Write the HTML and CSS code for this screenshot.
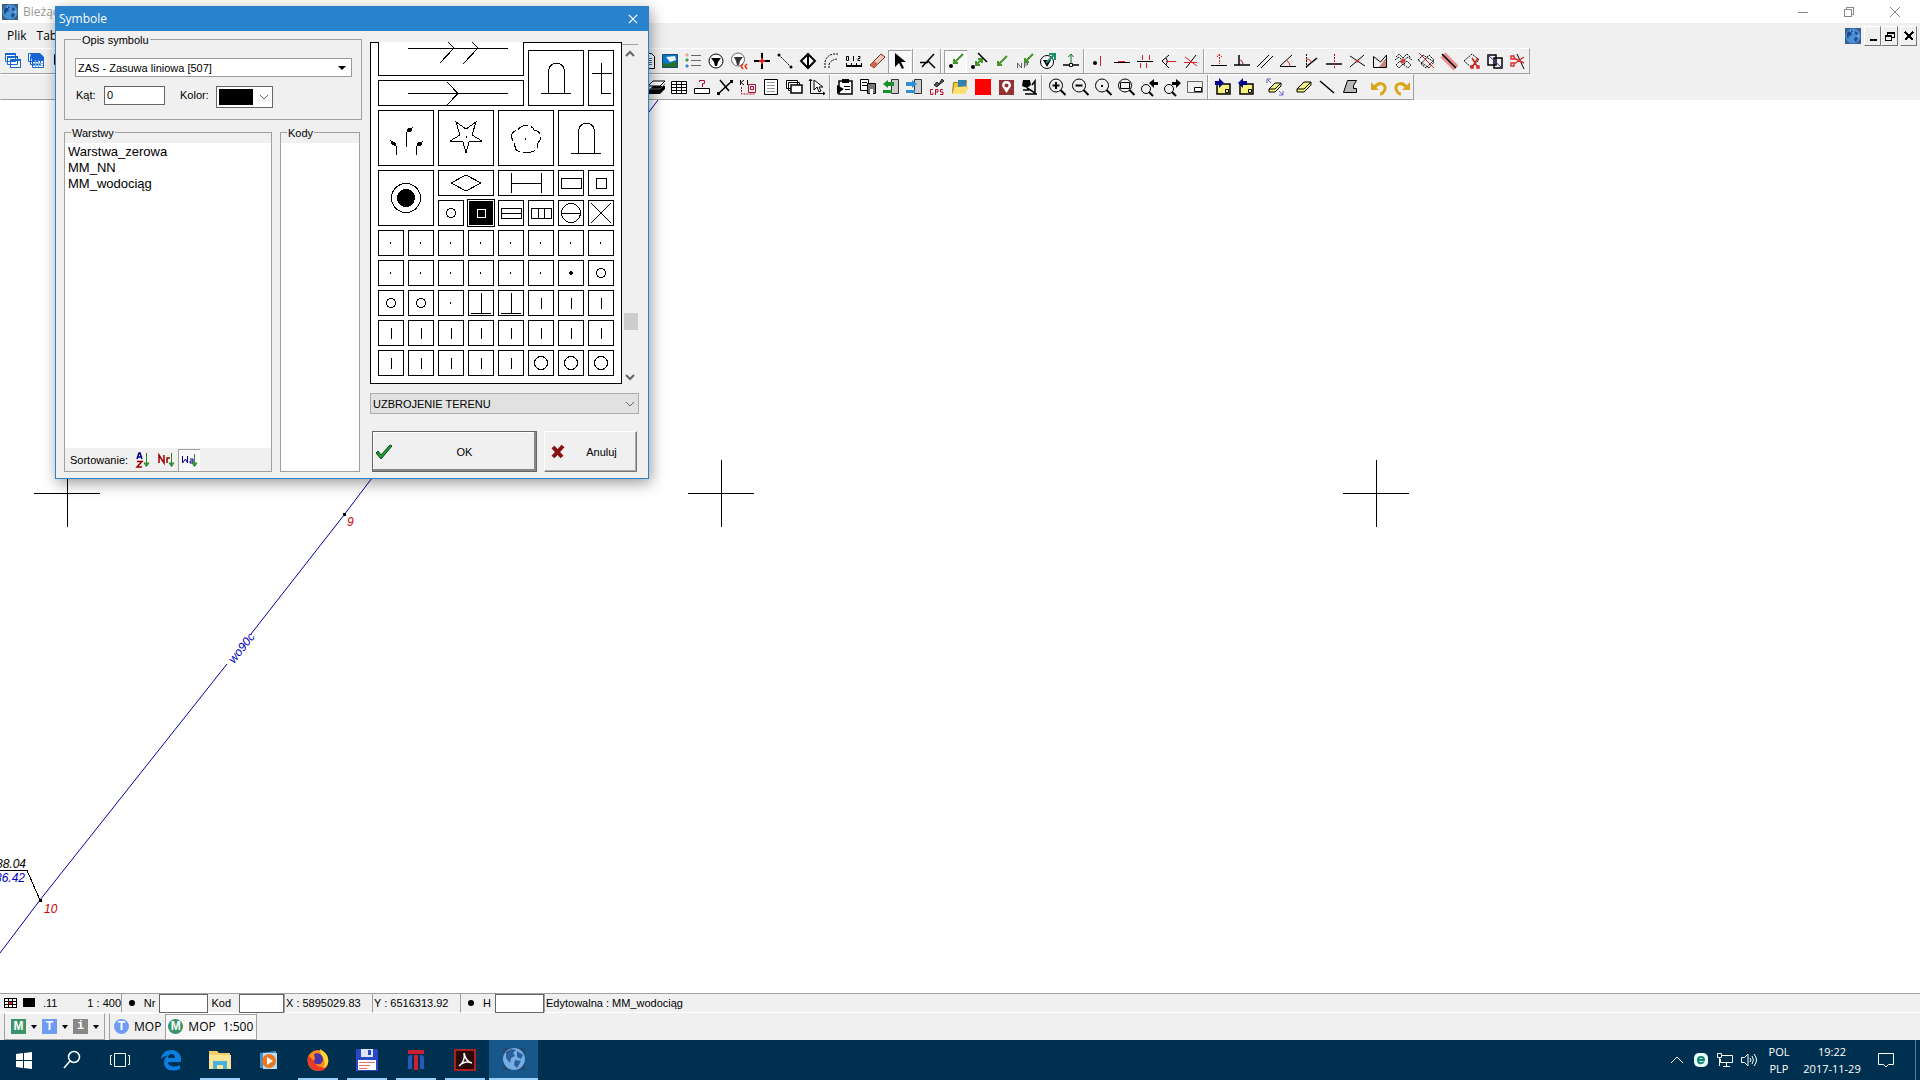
FILE: index.html
```html
<!DOCTYPE html>
<html lang="pl">
<head>
<meta charset="utf-8">
<title>Bieżąca</title>
<link rel="stylesheet" href="styles.css">
</head>
<body>
<svg class="defs" aria-hidden="true">
  <symbol id="globe" viewBox="0 0 16 16"><path fill="#3a5f8a" d="M0 0h16v16H0z"/><circle cx="8" cy="8" r="7.500" fill="#4a90d6"/><path fill="#1d4a86" d="M2 5l3-3 3 1-2 2 1 2-3 1-1 3-1-2zM10 3l3 2-1 2-2-1zM10 9l3 1-2 4-2-2z"/><path fill="#9cc8f0" d="M4 3l2-1v2zM12 8l2-1v2z"/></symbol>
  <symbol id="windot" viewBox="0 0 24 24"><path class="k" d="M11.500 11v2"/></symbol>
  <symbol id="bar" viewBox="0 0 24 24"><path class="k" d="M12.500 7v11"/></symbol>
  <symbol id="ring" viewBox="0 0 24 24"><circle class="k" cx="12" cy="12" r="4.500"/></symbol>
  <symbol id="bigring" viewBox="0 0 24 24"><circle class="k" cx="12" cy="12" r="6.500"/></symbol>
  <symbol id="tee" viewBox="0 0 24 24"><path class="k" d="M12.500 2v20M2 22.500h20"/></symbol>
  <symbol id="mag" viewBox="0 0 20 20"><circle class="k" cx="9" cy="8.500" r="6.500"/><path class="k2" d="M13.500 13l5 5"/></symbol>
  <symbol id="arch" viewBox="0 0 54 54"><path class="k" d="M12 42.500h30M19.500 42V19q2-7 8-7t8 7v23"/></symbol>
  <symbol id="caret" viewBox="0 0 10 10"><path class="g6" d="M1 3l4 4 4-4"/></symbol>
</svg>

<header class="titlebar">
  <svg class="i16"><use href="#globe"/></svg><span class="caption">Bieżąca</span>
  <div class="winctl">
    <button aria-label="Minimalizuj"><svg viewBox="0 0 12 12"><path class="g8" d="M1 6.500h10"/></svg></button>
    <button aria-label="Przywróć"><svg viewBox="0 0 12 12"><path class="g8" d="M1.500 3.500h7v7h-7zM3.500 3V1.500h7v7H9"/></svg></button>
    <button aria-label="Zamknij"><svg viewBox="0 0 12 12"><path class="g8" d="M1 1l10 10M11 1L1 11"/></svg></button>
  </div>
</header>

<nav class="menubar">
  <button>Plik</button><button>Tabela</button>
  <div class="mdi">
    <svg class="i16"><use href="#globe"/></svg>
    <button aria-label="Minimalizuj okno"><svg viewBox="0 0 12 12"><path class="k2" d="M3 10h7"/></svg></button>
    <button aria-label="Przywróć okno"><svg viewBox="0 0 12 12"><path class="k" d="M1.500 5.500h6v5h-6zM3.500 5V2.500h7v5H8M1 6.500h7M3 3.500h8"/></svg></button>
    <button class="mdi-close" aria-label="Zamknij okno"><svg viewBox="0 0 12 12"><path class="k2" d="M2 2l8 8M10 2l-8 8"/></svg></button>
  </div>
</nav>

<div class="toolbar">
  <div class="tools lead lead-top">
    <button aria-label="Okna"><svg viewBox="0 0 20 20"><path class="win" d="M2.500 2.500h10v8h-10zM4.500 5.500h10v8h-10zM7.500 8.500h10v8h-10z"/><path class="b2" d="M2 3h11M4 6h11M7 9h11"/></svg></button>
    <button aria-label="Tabele"><svg viewBox="0 0 20 20"><path class="win" d="M2.500 2.500h10v8h-10zM4.500 5.500h10v8h-10zM6.500 7.500h11v9h-11z"/><path fill="#1566d0" d="M4 2h10l4 4v4H6z"/><path fill="none" stroke="#7db4f0" d="M7 12.500h10M7 14.500h10M9.500 9v7M12.500 9v7"/></svg></button>
    <button aria-label="Nowy"><svg viewBox="0 0 20 20"><path class="k" d="M5.500 3.500h9v10h-9z"/></svg></button>
  </div>
  <div class="tools">
    <button aria-label="Dokument"><svg viewBox="0 0 20 20"><path class="k w" d="M5.500 2.500h9l3 3v12h-12z"/><path class="g6" d="M8 7.500h7M8 9.500h7M8 11.500h7M8 13.500h7"/></svg></button>
    <button aria-label="Obraz"><svg viewBox="0 0 20 20"><path fill="#0878c8" stroke="#124a78" d="M2.500 3.500h15v13h-15z"/><path fill="#e8f4ff" d="M6 6l9-1 1 4-6 2z"/><path fill="#287028" d="M3 16v-4l5 1 9-3v6z"/></svg></button>
    <button aria-label="Legenda"><svg viewBox="0 0 20 20"><path fill="#e8a090" d="M4 2l2 2-2 2-2-2z"/><path fill="#38a048" d="M4 7l2 2-2 2-2-2z"/><path fill="#4080d0" d="M4 13l2 2-2 2-2-2z"/><path class="g6" d="M8 4.500h10M8 9.500h10M8 14.500h10"/></svg></button>
    <button aria-label="Filtr"><svg viewBox="0 0 20 20"><circle class="k w" cx="10" cy="10" r="7"/><path d="M5 7h10l-3 4-1 4H9l-1-4z"/></svg></button>
    <button aria-label="Cofnij filtr"><svg viewBox="0 0 20 20"><circle class="g6 w" cx="9" cy="8.500" r="6.500"/><path fill="#333" d="M5 6h9l-3 4-1 4H8l-1-4z"/><path fill="none" stroke="#e03010" stroke-width="1.500" d="M14 13l-2 2 2 3M18 13l-2 2 2 3"/></svg></button>
    <button aria-label="Punkt"><svg viewBox="0 0 20 20"><path class="k2" d="M10 2v5M10 13v5M2 10h5M13 10h5"/><path class="r2" d="M10 7v6M7 10h6"/></svg></button>
    <button aria-label="Odcinek"><svg viewBox="0 0 20 20"><path class="k dash" d="M4 4l12 12"/><circle cx="4" cy="4" r="1.500"/><circle cx="16" cy="16" r="1.500"/></svg></button>
    <button aria-label="Symbol"><svg viewBox="0 0 20 20"><path class="k2 w" d="M10 3l7 7-7 7-7-7z"/><path class="k2" d="M10 3v14"/></svg></button>
    <button aria-label="Łuk"><svg viewBox="0 0 20 20"><path class="k dash" d="M4 17V11q1-6 8-8h5M8 17v-3q1-5 8-6"/></svg></button>
    <button aria-label="Miara"><svg viewBox="0 0 20 20"><path class="k2" d="M2 15h16"/><path class="k" d="M2.500 12v3M17.500 12v3M7.500 12v2M12.500 12v2M2.500 5.500h2v4h-2zM9.500 5v5M14 5.500h2v2h-2v2h2"/></svg></button>
    <button aria-label="Gumka"><svg viewBox="0 0 20 20"><path fill="#f0c8b8" stroke="#703020" d="M3 14L14 3l4 3L7 17z"/><path fill="#c86850" d="M3 14l4-4 4 3-4 4z"/></svg></button>
    <button class="on" aria-label="Wskaż"><svg viewBox="0 0 20 20"><path d="M5 2v14l4-4 3 6 2-1-3-6h5z"/></svg></button>
    <i class="sep"></i>
    <button aria-label="Prostopadła"><svg viewBox="0 0 20 20"><path class="k15" d="M2 11.500h8M4 16L16 3M10 10l7 7"/></svg></button>
    <i class="sep"></i>
    <button class="on" aria-label="Kieruj do punktu"><svg viewBox="0 0 20 20"><path class="gr" d="M17 3l-9 9M8 8v4h4"/><circle cx="5" cy="15" r="2"/></svg></button>
    <button aria-label="Kieruj do linii"><svg viewBox="0 0 20 20"><path class="gr" d="M13 8l-6 6M7 10v4h4M9 8h4v4"/><path class="k15" d="M9 2l9 9"/><circle cx="4" cy="16" r="2"/></svg></button>
    <button aria-label="Kieruj"><svg viewBox="0 0 20 20"><path class="gr" d="M15 5l-9 9M6 10v4h4"/></svg></button>
    <button aria-label="Numer"><svg viewBox="0 0 20 20"><path class="gr" d="M18 3l-8 8M10 7v4h4"/><path class="g6" d="M2.500 17v-5l4 5v-5M9.500 17v-5h3v2h-3"/></svg></button>
    <button aria-label="Filtr kierunku"><svg viewBox="0 0 20 20"><circle class="k w" cx="9" cy="11" r="6.500"/><path d="M5 9h8l-4 7z"/><path class="te" d="M8 12l9-9M11 3h6v6"/></svg></button>
    <button aria-label="Rzut"><svg viewBox="0 0 20 20"><path class="k15" d="M2 14h16"/><path class="k w" d="M8.500 12.500h3v3h-3z"/><path fill="none" stroke="#107820" d="M10 3v9M7.500 6L10 3l2.500 3"/></svg></button>
    <i class="sep"></i>
    <button aria-label="Odsunięcie"><svg viewBox="0 0 20 20"><circle cx="6" cy="12" r="2"/><path class="r" d="M11.500 5v10"/></svg></button>
    <button aria-label="Na linii"><svg viewBox="0 0 20 20"><path class="k" d="M2 11.500h16"/><path class="r" d="M6 10.500h7"/></svg></button>
    <button aria-label="Przecięcia"><svg viewBox="0 0 20 20"><path class="k" d="M2 10.500h16"/><path class="r" d="M7.500 4v5M14.500 4v5M5.500 12v5M11.500 12v5"/></svg></button>
    <button aria-label="Kąt"><svg viewBox="0 0 20 20"><path class="k" d="M11 4l-7 6 7 7M8 7q3 3 0 7"/><path class="r" d="M8 10.500h10"/></svg></button>
    <button aria-label="Krzyżowanie"><svg viewBox="0 0 20 20"><path class="k" d="M5 17L15 4"/><path class="r" d="M4 6l12 9M3 11.500h13"/></svg></button>
    <i class="sep"></i>
    <button aria-label="Pion"><svg viewBox="0 0 20 20"><path class="k" d="M2 14.500h16"/><path class="r dash" d="M10.500 3v10M8 6l2-3 3 3"/></svg></button>
    <button aria-label="Kąt prosty"><svg viewBox="0 0 20 20"><path class="k15" d="M2 14h16M7 4v10"/><path class="rd" d="M7 9q4 0 4 5"/></svg></button>
    <button aria-label="Równoległa"><svg viewBox="0 0 20 20"><path class="k" d="M2 16L14 4M6 17L18 5"/></svg></button>
    <button aria-label="Kąt ostry"><svg viewBox="0 0 20 20"><path class="k" d="M2 15.500h16M2 15L14 4"/><path class="r" d="M8 9q4 2 4 6"/></svg></button>
    <button aria-label="Kąt linii"><svg viewBox="0 0 20 20"><path class="k dash" d="M5.500 3v14"/><path class="k15" d="M5 16L16 7"/><path class="r" d="M5 8q5 0 5 4"/></svg></button>
    <button aria-label="Rzut punktu"><svg viewBox="0 0 20 20"><path class="k15" d="M2 13h16"/><path class="rd dash" d="M10.500 3v14"/></svg></button>
    <button aria-label="Przecięcie"><svg viewBox="0 0 20 20"><path class="k" d="M3 5l15 10M3 16L17 4"/><circle cx="10" cy="10" r="1.500" fill="#d22"/></svg></button>
    <button aria-label="Obszar"><svg viewBox="0 0 20 20"><path class="k" d="M3.500 5.500v11h13V4l-6 7z"/><path fill="#d08080" d="M9 16l7-9v9z"/></svg></button>
    <button aria-label="Oczka"><svg viewBox="0 0 20 20"><path class="k dash" d="M3 6l3-3 4 4 4-4 4 4M2 9l4-3 4 4 5-4 4 3M3 14l4-4 3 4 4-4 4 4-3 3-5-4-4 4z"/><path fill="#c44" d="M10 7l3 3-3 3-3-3z"/></svg></button>
    <button aria-label="Siatka"><svg viewBox="0 0 20 20"><path class="k dash" d="M2 9l5-5 11 7-5 6zM5 13l8-9 5 5-8 8z"/><path class="r" d="M3 2l15 15"/></svg></button>
    <button aria-label="Pas"><svg viewBox="0 0 20 20"><path fill="none" stroke="#e89090" stroke-width="7" d="M4 4l13 13"/><path class="k15" d="M3 3l14 14"/></svg></button>
    <button aria-label="Wytnij obszar"><svg viewBox="0 0 20 20"><path class="k dash" d="M2 10l8-7 7 6-8 7z"/><path fill="none" stroke="#c22" stroke-width="1.500" d="M10 7l5 8M16 7l-5 8M9 15h2v2H9zM15 15h2v2h-2z"/></svg></button>
    <button aria-label="Podziel"><svg viewBox="0 0 20 20"><path class="k15" d="M3 4h8v10H3zM9 7h8v10H9z"/><path fill="none" stroke="#33b" d="M3 4l14 13"/></svg></button>
    <button aria-label="Przytnij"><svg viewBox="0 0 20 20"><path class="k" d="M9 3l7 15"/><path fill="none" stroke="#d33" stroke-width="1.500" d="M16 6L6 13M16 12L6 7M3 5h3v3H3zM3 12h3v3H3z"/></svg></button>
  </div>
</div>

<div class="toolbar">
  <div class="tools lead lead-bottom"></div>
  <div class="tools">
    <button aria-label="Warstwy"><svg viewBox="0 0 20 20"><path class="k w" d="M7 4h12l-5 5H2z"/><path d="M7 9h12v3l-5 5H2v-3z"/><path class="g6" d="M2 12h12l5-5"/></svg></button>
    <button aria-label="Tabela"><svg viewBox="0 0 20 20"><path class="k w" d="M2.500 4.500h15v12h-15zM2 7.500h16M2 10.500h16M2 13.500h16M7.500 4v12M12.500 4v12"/></svg></button>
    <button aria-label="Zapytanie"><svg viewBox="0 0 20 20"><path class="k w" d="M2.500 11.500h15v5h-15z"/><path class="rd" d="M7.500 5V3.500h5v3h-2V10"/></svg></button>
    <button aria-label="Punkty linii"><svg viewBox="0 0 20 20"><path class="k15" d="M3 17L17 4M5 3l9 11"/><path d="M2 15h3v3H2zM15 3h3v3h-3z"/></svg></button>
    <button aria-label="Kontrola"><svg viewBox="0 0 20 20"><path class="k" d="M2.500 3v5M6 3L3 5.500 6 8M9.500 3v5"/><path class="rd" d="M10.500 7.500h7v8h-7zM12.500 9.500h3v3h-3z"/><path class="rd dash" d="M3.500 10v7H17"/></svg></button>
    <button aria-label="Opis"><svg viewBox="0 0 20 20"><path class="k w" d="M3.500 2.500h13v15h-13z"/><path fill="none" stroke="#999" d="M6 5.500h8M6 8.500h8M6 11.500h8M6 14.500h8"/></svg></button>
    <button aria-label="Kaskada"><svg viewBox="0 0 20 20"><path class="k w" d="M2.500 3.500h11v8h-11zM4.500 5.500h11v8h-11z"/><path class="k15 w" d="M7 8h11v8H7z"/></svg></button>
    <button aria-label="Wskaż wierzchołek"><svg viewBox="0 0 20 20"><path class="k" d="M3.500 3v13.500H18M2 4l1.500-2L5 4M16 15l2 1.500-2 1.500"/><path class="k w" d="M7 3v10l3-3 2 5 2-1-2-4h4z"/></svg></button>
    <i class="sep"></i>
    <button aria-label="Wklej"><svg viewBox="0 0 20 20"><path class="k15 w" d="M4 4h13v13H4z"/><path d="M7 2h7v4H7zM2 8l7 4-7 5z"/><path class="k" d="M9 9.500h6M10 12.500h5"/></svg></button>
    <button aria-label="Kopiuj"><svg viewBox="0 0 20 20"><path class="k w" d="M2.500 2.500h8v11h-8z"/><path class="k" d="M4 5.500h5M4 8.500h5"/><path fill="#777" stroke="#000" d="M9.500 6.500h8v10h-8z"/><path fill="#fff" d="M12 12h3v5h-3z"/></svg></button>
    <button aria-label="Import"><svg viewBox="0 0 20 20"><path fill="#ccc" stroke="#333" d="M10.500 2.500h7v14h-7z"/><path fill="#189030" d="M2 7l5-4v2h6v4H7v2zM2 13h9v3H2z"/></svg></button>
    <button aria-label="Eksport"><svg viewBox="0 0 20 20"><path fill="#ccc" stroke="#333" d="M10.500 2.500h7v14h-7z"/><path fill="#3090d0" d="M13 7L8 3v2H2v4h6v2zM2 13h9v3H2z"/></svg></button>
    <button aria-label="GPS"><svg viewBox="0 0 20 20"><path fill="#555" stroke="#222" d="M7 8l3-3 2 2 3-5 2 2-4 3-3 3z"/><path class="rd" d="M6 12.500H3.500v5H6v-2M8.500 18v-5.500H11V15H9M16 12.500h-2.500V15H16v2.500h-3"/></svg></button>
    <button aria-label="Otwórz"><svg viewBox="0 0 20 20"><path fill="#f5c530" stroke="#a07818" d="M3.500 5.500h5l2-2h6l-1 12-13 1z"/><path fill="#3080b0" d="M8 3h8v6l-8 1z"/><path fill="#ffe070" d="M5 10h14l-4 7H2z"/></svg></button>
    <button aria-label="Czerwony"><svg viewBox="0 0 20 20"><path fill="#f00" d="M2 2h16v16H2z"/></svg></button>
    <button aria-label="Lokalizacja"><svg viewBox="0 0 20 20"><path fill="#933232" d="M3 3h15v15H3z"/><path fill="#fff" d="M10.500 16L6 9q0-5 4.500-5T15 9z"/><circle cx="10.500" cy="8.500" r="2" fill="#933232"/></svg></button>
    <button aria-label="Teren"><svg viewBox="0 0 20 20"><path d="M4 3h7l1 5-4 3-5-2z"/><path class="k15" d="M8 11l8 5V4l-3 4M4 13h6M6 17h12"/></svg></button>
    <i class="sep"></i>
    <button aria-label="Powiększ"><svg viewBox="0 0 20 20"><use href="#mag"/><path class="k2" d="M9 5v7M5.500 8.500h7"/></svg></button>
    <button aria-label="Pomniejsz"><svg viewBox="0 0 20 20"><use href="#mag"/><path class="k2" d="M5.500 8.500h7"/></svg></button>
    <button aria-label="Centruj"><svg viewBox="0 0 20 20"><use href="#mag"/><path d="M8 8h2v2H8z"/></svg></button>
    <button aria-label="Okno"><svg viewBox="0 0 20 20"><use href="#mag"/><path class="k" d="M4.500 5.500h9v6h-9z"/></svg></button>
    <button aria-label="Poprzedni widok"><svg viewBox="0 0 20 20"><circle class="k" cx="7" cy="12" r="4.500"/><path class="k2" d="M10 15l4 4"/><path d="M10 6l5-4v3h4v3h-4v3z"/></svg></button>
    <button aria-label="Następny widok"><svg viewBox="0 0 20 20"><circle class="k" cx="7" cy="12" r="4.500"/><path class="k2" d="M10 15l4 4"/><path d="M19 6l-5-4v3h-4v3h4v3z"/></svg></button>
    <button aria-label="Podgląd"><svg viewBox="0 0 20 20"><path class="g6" d="M2.500 4.500h15v11h-15z"/><path class="k w" d="M9.500 10.500h7v4h-7z"/></svg></button>
    <i class="sep"></i>
    <button aria-label="Dalej"><svg viewBox="0 0 20 20"><path fill="#f5f080" stroke="#000" stroke-width="1.500" d="M4 7h13v10H4z"/><path fill="#008" d="M2 4h4V1l5 5-5 5V8H2z"/><path class="k" d="M12.500 12.500h3v3h-3z"/></svg></button>
    <button aria-label="Wstecz"><svg viewBox="0 0 20 20"><path fill="#f5f080" stroke="#000" stroke-width="1.500" d="M4 7h13v10H4z"/><path fill="#008" d="M11 4H7V1L2 6l5 5V8h4z"/><path class="k" d="M12.500 12.500h3v3h-3z"/></svg></button>
    <i class="gap"></i>
    <button aria-label="Gumka obszaru"><svg viewBox="0 0 20 20"><path fill="#f0f080" stroke="#000" d="M4 12l6-6h6v3l-6 6H4z"/><path class="k" d="M4 12h6l6-6"/><path fill="none" stroke="#66c" d="M2 6V2h4M2 2l4 4M18 14v4h-4M18 18l-4-4"/></svg></button>
    <i class="gap"></i>
    <button aria-label="Usuń"><svg viewBox="0 0 20 20"><path fill="#f0f080" stroke="#000" d="M3 12l7-7h7v3l-7 7H3z"/><path class="k" d="M3 12h7l7-7"/></svg></button>
    <button aria-label="Linia"><svg viewBox="0 0 20 20"><path class="k15" d="M3 4l14 12"/></svg></button>
    <button aria-label="Wielobok"><svg viewBox="0 0 20 20"><path fill="#b8b8b8" stroke="#000" d="M7.500 3.500h9l-3 5v3h3v4h-13z"/></svg></button>
    <i class="gap"></i>
    <button aria-label="Cofnij"><svg viewBox="0 0 20 20"><path fill="none" stroke="#dba520" stroke-width="3" d="M6 10c4-6 11-3 10 2-1 3-2 5-5 5"/><path fill="#dba520" d="M2 5v8h8z"/></svg></button>
    <button aria-label="Ponów"><svg viewBox="0 0 20 20"><path fill="none" stroke="#dba520" stroke-width="3" d="M14 10c-4-6-11-3-10 2 1 3 2 5 5 5"/><path fill="#dba520" d="M18 5v8h-8z"/></svg></button>
  </div>
</div>

<main class="map">
  <svg class="drawing">
    <g class="k">
      <path d="M34 393.500h66M67.500 360v67M688 393.500h66M721.500 360v67M1343 393.500h66M1376.500 360v67"/>
      <path d="M0 770.500h27L40 800"/>
    </g>
    <path class="pipe" d="M658 0L344 415L251 534M227 564L40 800L0 853"/>
    <path d="M343 413h3v3h-3zM39 799h3v3h-3z"/>
    <g class="cad">
      <text class="red" x="347" y="426">9</text>
      <text class="red" x="44" y="813">10</text>
      <text x="-4" y="768">88.04</text>
      <text class="blue" x="-5" y="782">86.42</text>
      <text class="blue" transform="translate(234 564) rotate(-52)">wo90c</text>
    </g>
  </svg>
</main>

<footer class="status">
  <div class="cell c-scale">
    <svg class="i14" viewBox="0 0 14 14"><path class="k w" d="M.5 2.500h12v9H.5zM0 5.500h13M0 8.500h13M4.500 2v10M8.500 2v10"/><path class="r2" d="M5 7h3"/></svg>
    <svg class="i14" viewBox="0 0 14 14"><path d="M1 2h12v9H1z"/></svg>
    <span class="size">.11</span><span class="push">1 : 400</span>
  </div>
  <div class="cell c-nr"><span class="dot"></span><label for="nr">Nr</label><input id="nr"><label for="kod">Kod</label><input id="kod" class="short"></div>
  <div class="cell c-x">X : 5895029.83</div>
  <div class="cell c-x">Y : 6516313.92</div>
  <div class="cell c-h"><span class="dot"></span><label for="h">H</label><input id="h"></div>
  <div class="cell c-edit">Edytowalna : MM_wodociąg</div>
</footer>

<div class="modes">
  <div class="modegroup">
    <button><b class="tile green">M</b><i class="drop"></i></button>
    <button><b class="tile azure">T</b><i class="drop"></i></button>
    <button><b class="tile gray">i</b><i class="drop"></i></button>
  </div>
  <div class="modegroup tight">
    <button><b class="tile azure round">T</b>MOP</button>
    <button class="on"><b class="tile green round">M</b><span>MOP</span><span>1:500</span></button>
  </div>
</div>

<nav class="taskbar">
  <button class="sys" aria-label="Start"><svg viewBox="0 0 24 24"><path fill="#fff" d="M4 6l7-1v7H4zM12 5l8-1v8h-8zM4 13h7v7l-7-1zM12 13h8v8l-8-1z"/></svg></button>
  <button class="sys" aria-label="Szukaj"><svg viewBox="0 0 24 24"><g fill="none" stroke="#fff" stroke-width="1.500"><circle cx="14" cy="9" r="5.500"/><path d="M10 13l-6 7"/></g></svg></button>
  <button class="sys" aria-label="Widok zadań"><svg viewBox="0 0 24 24"><path fill="none" stroke="#fff" d="M6.500 5.500h11v13h-11zM4 7.500H2.500v9H4M20 7.500h1.500v9H20"/></svg></button>
  <button class="first" aria-label="Edge"><svg viewBox="0 0 24 24"><path fill="#0b7fe0" d="M2 11C3 5 7 2 12 2c6 0 10 4 10 9v3H9c0 3 3 4.500 6 4.500 2 0 4-.5 6-1.500v4c-2 1-4.500 1.500-7 1.500-6 0-9-3.500-9-8 0-3 1.500-5.500 4-7-3 .5-5.500 1.500-7 3.500zm7-1h7c0-2-1-4-3.500-4S9 8 9 10z"/></svg></button>
  <button class="run" aria-label="Eksplorator"><svg viewBox="0 0 24 24"><path fill="#f0cd68" d="M1 3h8l2 2h11v16H1z"/><path fill="#fbe498" d="M1 7h22v14H1z"/><path fill="#48b0dc" d="M5 13h14v8h-4v-4H9v4H5z"/></svg></button>
  <button aria-label="Odtwarzacz"><svg viewBox="0 0 24 24"><path fill="#4a8fc8" d="M3 5l16-2v18L3 20z"/><path fill="#b8dcf2" d="M6 5h14v16H6z"/><circle cx="12" cy="13" r="7" fill="#e87820"/><path fill="#fff" d="M10 9l6 4-6 4z"/></svg></button>
  <button class="run" aria-label="Firefox"><svg viewBox="0 0 24 24"><circle cx="12" cy="12.500" r="10.500" fill="#ff8a18"/><path fill="#e83a28" d="M2 7c-2 9 3 16 11 16 4 0 7-2 9-6-5 4-12 2-13-3z"/><path fill="#ffd636" d="M14 1c5 3 9 7 8 14-1 3-3 5-5 5 3-5 2-9-2-12z"/><path fill="#4a35a8" d="M8 6c5-2 9 1 9 5s-3 6-6 5c-3 0-4-3-2-5z"/></svg></button>
  <button class="run" aria-label="Dyskietka"><svg viewBox="0 0 24 24"><path fill="#2848c8" d="M1 1h21l1 2v20H1z"/><path fill="#dfe4f4" d="M6 1h12v8H6z"/><path fill="#2848c8" d="M13 2h3v5h-3z"/><path fill="#fff" d="M3 12h18v10H3z"/><path fill="none" stroke="#e87070" d="M4 14.500h16M4 17.500h11M4 20.500h8"/></svg></button>
  <button class="run" aria-label="Projekt"><svg viewBox="0 0 24 24"><path fill="#cc2030" d="M4 2h16v4H4zM10 7h4v15h-4z"/><path fill="#2858b8" d="M4 10q0-3 4-3v14H4zM16 7q4 0 4 3v11h-4z"/></svg></button>
  <button class="run" aria-label="Acrobat"><svg viewBox="0 0 24 24"><path fill="#280808" stroke="#e02018" stroke-width="1.500" d="M2 2h20v20H2z"/><path fill="none" stroke="#fff" stroke-width="1.500" d="M11 5c1 5 3 9 8 10-5-2-9-1-13 3 4-3 6-8 5-13z"/></svg></button>
  <button class="active" aria-label="Mapa"><svg viewBox="0 0 24 24"><path fill="#234a70" d="M1 1h22v22H1z"/><circle cx="12" cy="12" r="11" fill="#76aee2"/><path fill="#2a5f9c" d="M4 5l5-3 5 1-3 3 2 3-4 2-1 5-4-5zM15 4l6 4-2 4-4-2zM13 13l6 1-4 7-3-3z"/></svg></button>
  <div class="tray">
    <button aria-label="Ukryte ikony"><svg viewBox="0 0 16 16"><path class="t" d="M2 11l6-6 6 6"/></svg></button>
    <button aria-label="Antywirus"><svg viewBox="0 0 16 16"><rect x="1" y="1" width="14" height="14" rx="5" fill="#e8fffa"/><path fill="none" stroke="#108070" stroke-width="2" d="M5 8h6c0-4-6-4-6 0s3 4 6 2"/></svg></button>
    <button aria-label="Sieć"><svg viewBox="0 0 16 16"><path class="t" d="M5 3.500h10.500v7H3.500V7M9.500 11v3M6 14.500h7M.5 1.500h4v4h-4zM2.500 6v8"/></svg></button>
    <button aria-label="Głośność"><svg viewBox="0 0 16 16"><path class="t" d="M.5 5.500h3L7 2v12l-3.500-3.500h-3zM9 6q2 2 0 4M11 4q3 4 0 8M13 2q5 6 0 12"/></svg></button>
    <div class="stack lang"><span>POL</span><span>PLP</span></div>
    <div class="stack clock"><span>19:22</span><span>2017-11-29</span></div>
    <button class="note" aria-label="Powiadomienia"><svg viewBox="0 0 16 16"><path class="t" d="M.5 1.500h15v11h-5L8 15l-2.500-2.500h-5z"/></svg></button>
  </div>
</nav>

<section class="dialog" role="dialog" aria-labelledby="dlg">
  <header><h1 id="dlg">Symbole</h1><button aria-label="Zamknij"><svg viewBox="0 0 12 12"><path fill="none" stroke="#fff" stroke-width="1.500" d="M1 1l10 10M11 1L1 11"/></svg></button></header>
  <div class="dlg-body">
    <div class="left">
      <fieldset class="desc">
        <legend>Opis symbolu</legend>
        <div class="combo">
          <select aria-label="Symbol"><option>ZAS - Zasuwa liniowa [507]</option></select>
          <i class="drop"></i>
        </div>
        <div class="params">
          <label for="kat">Kąt:</label><input id="kat" value="0">
          <label for="kolor">Kolor:</label>
          <div class="combo color"><select id="kolor"><option value="#000000" aria-label="czarny"></option></select><svg class="chev"><use href="#caret"/></svg></div>
        </div>
      </fieldset>
      <div class="lists">
        <fieldset class="layers">
          <legend>Warstwy</legend>
          <ul><li>Warstwa_zerowa</li><li>MM_NN</li><li>MM_wodociąg</li></ul>
          <div class="sort"><span>Sortowanie:</span>
            <button aria-label="Alfabetycznie"><svg viewBox="0 0 18 18"><path fill="none" stroke="#008" stroke-width="1.500" d="M3 8l2-6h1l2 6M4 6h4"/><path fill="none" stroke="#900" stroke-width="1.500" d="M3 10.500h5L3 16h5"/><path class="ar" d="M12.500 2v13M10 12l2.500 3.500L15 12z"/></svg></button>
            <button aria-label="Według numeru"><svg viewBox="0 0 18 18"><path fill="none" stroke="#900" stroke-width="1.500" d="M2 12V4l5 8V4M10 12V7h3"/><path class="ar" d="M14.500 2v13M12 12l2.500 3.500L17 12z"/></svg></button>
            <button class="on" aria-label="Według warstwy"><svg viewBox="0 0 18 18"><path fill="none" stroke="#008" d="M2.500 5v7l3-4 2 4V5M10 8h3v4h-3v-2h3"/><path class="ar" d="M14.500 3v12M12 12l2.500 3.500L17 12z"/></svg></button>
          </div>
        </fieldset>
        <fieldset class="codes"><legend>Kody</legend><div class="blank"></div></fieldset>
      </div>
    </div>
    <div class="right">
      <div class="picker">
        <div class="palette"><div class="grid">
          <button class="w5 h2"><svg viewBox="0 0 144 54"><path class="k" d="M29 27.500h100M65 17l10 10-14 15M89 17l10 10-15 16"/></svg></button>
          <i class="w3"></i>
          <button class="w2 h2"><svg><use href="#arch"/></svg></button>
          <button class="h2"><svg viewBox="0 0 24 54"><path class="k" d="M12.500 12v30.500H22M3 22.500h20"/></svg></button>
          <button class="w5"><svg viewBox="0 0 144 24"><path class="k" d="M29 12.500h100M68 1l11 11.500L68 24"/></svg></button>
          <button class="w2 h2"><svg viewBox="0 0 54 54"><path class="k" d="M27.500 36V21M17.500 44v-9M37.500 44v-9"/><path stroke="#000" d="M28 21l1-3 4-1-1 3zM17 35l-4-2-1-3 4 2zM38 35l1-3 4-1-1 3z"/></svg></button>
          <button class="w2 h2"><svg viewBox="0 0 54 54"><path class="k" d="M17 11l10 7 10-7-4 13 10 6-13 1-3 11-3-11-13-1 10-6zM27 25v2"/></svg></button>
          <button class="w2 h2"><svg viewBox="0 0 54 54"><path class="k" stroke-dasharray="12 3" d="M19 19c2-6 14-6 16 0 8 1 8 9 4 13 0 8-5 10-12 9-7 1-12-1-11-9-5-4-5-12 3-13z"/><path class="k" d="M26.500 27v2"/></svg></button>
          <button class="w2 h2"><svg><use href="#arch"/></svg></button>
          <button class="w2 h2"><svg viewBox="0 0 54 54"><circle class="k" cx="27" cy="27" r="14.500"/><circle cx="27" cy="27" r="9"/></svg></button>
          <button class="w2"><svg viewBox="0 0 54 24"><path class="k" d="M12 12l15-8 15 8-15 8z"/></svg></button>
          <button class="w2"><svg viewBox="0 0 54 24"><path class="k" d="M12.500 2v20M42.500 2v20M12 12.500h30"/></svg></button>
          <button><svg viewBox="0 0 24 24"><path class="k" d="M2.500 7.500h20v10h-20z"/></svg></button>
          <button><svg viewBox="0 0 24 24"><path class="k" d="M7.500 7.500h10v10h-10z"/></svg></button>
          <button><svg><use href="#ring"/></svg></button>
          <button class="picked"><svg viewBox="0 0 24 24"><path d="M8.500 8.500h8v8h-8z"/></svg></button>
          <button><svg viewBox="0 0 24 24"><path class="k" d="M2.500 7.500h20v10h-20zM2 12.500h20"/></svg></button>
          <button><svg viewBox="0 0 24 24"><path class="k" d="M2.500 7.500h20v10h-20zM9.500 8v10M15.500 8v10"/></svg></button>
          <button><svg viewBox="0 0 24 24"><circle class="k" cx="12" cy="12" r="9.500"/><path class="k" d="M2 12.500h20"/></svg></button>
          <button><svg viewBox="0 0 24 24"><path class="k" d="M2 2l20 20M22 2L2 22"/></svg></button>
          <button><svg><use href="#windot"/></svg></button><button><svg><use href="#windot"/></svg></button><button><svg><use href="#windot"/></svg></button><button><svg><use href="#windot"/></svg></button>
          <button><svg><use href="#windot"/></svg></button><button><svg><use href="#windot"/></svg></button><button><svg><use href="#windot"/></svg></button><button><svg><use href="#windot"/></svg></button>
          <button><svg><use href="#windot"/></svg></button><button><svg><use href="#windot"/></svg></button><button><svg><use href="#windot"/></svg></button><button><svg><use href="#windot"/></svg></button>
          <button><svg><use href="#windot"/></svg></button><button><svg><use href="#windot"/></svg></button><button><svg viewBox="0 0 24 24"><path d="M11 10h2v1h1v2h-1v1h-2v-1h-1v-2h1z"/></svg></button><button><svg><use href="#ring"/></svg></button>
          <button><svg><use href="#ring"/></svg></button><button><svg><use href="#ring"/></svg></button><button><svg><use href="#windot"/></svg></button><button><svg><use href="#tee"/></svg></button>
          <button><svg><use href="#tee"/></svg></button><button><svg><use href="#bar"/></svg></button><button><svg><use href="#bar"/></svg></button><button><svg><use href="#bar"/></svg></button>
          <button><svg><use href="#bar"/></svg></button><button><svg><use href="#bar"/></svg></button><button><svg><use href="#bar"/></svg></button><button><svg><use href="#bar"/></svg></button>
          <button><svg><use href="#bar"/></svg></button><button><svg><use href="#bar"/></svg></button><button><svg><use href="#bar"/></svg></button><button><svg><use href="#bar"/></svg></button>
          <button><svg><use href="#bar"/></svg></button><button><svg><use href="#bar"/></svg></button><button><svg><use href="#bar"/></svg></button><button><svg><use href="#bar"/></svg></button>
          <button><svg><use href="#bar"/></svg></button><button><svg><use href="#bigring"/></svg></button><button><svg><use href="#bigring"/></svg></button><button><svg><use href="#bigring"/></svg></button>
        </div></div>
        <div class="scroll">
          <svg viewBox="0 0 10 10"><path class="g6" stroke-width="2" d="M1 7l4-4 4 4"/></svg>
          <i class="thumb"></i>
          <svg viewBox="0 0 10 10"><path class="g6" stroke-width="2" d="M1 3l4 4 4-4"/></svg>
        </div>
      </div>
      <div class="combo group"><select aria-label="Grupa"><option>UZBROJENIE TERENU</option></select><svg class="chev"><use href="#caret"/></svg></div>
      <div class="actions">
        <button class="ok"><svg viewBox="0 0 18 18"><path fill="#18a028" stroke="#0a4a20" d="M1 10l2-2 3 4L15 2l2 1L6 16z"/></svg><span>OK</span></button>
        <button class="cancel"><svg viewBox="0 0 18 18"><path fill="none" stroke="#8a1010" stroke-width="4" d="M4 14L14 3M4 4l9 10"/></svg><span>Anuluj</span></button>
      </div>
    </div>
  </div>
</section>
</body>
</html>
```
FILE: styles.css
```css
* { box-sizing: border-box; }
body {
  margin: 0;
  min-height: 100vh;
  display: flex;
  flex-direction: column;
  background: #f0f0f0;
  color: #000;
  font: 11px/14px "Liberation Sans", sans-serif;
  overflow-x: hidden;
}
button, input, select { font: inherit; color: inherit; margin: 0; padding: 0; border: 0; background: none; border-radius: 0; }
svg { display: block; shape-rendering: crispEdges; }
.defs { position: absolute; width: 0; height: 0; }

/* stroke and fill helpers shared by the icons */
.k, .k15, .k2 { fill: none; stroke: #000; }
.k15 { stroke-width: 1.5; }
.k2 { stroke-width: 2; }
.w { fill: #fff; }
.r, .r2 { fill: none; stroke: #e02020; }
.r2 { stroke-width: 2; }
.rd { fill: none; stroke: #b01030; }
.g6 { fill: none; stroke: #666; }
.g6.w { fill: #fff; }
.g8 { fill: none; stroke: #888; }
.gr { fill: none; stroke: #48942c; stroke-width: 2; }
.te { fill: none; stroke: #189070; stroke-width: 2; }
.b2 { fill: none; stroke: #1566d0; stroke-width: 2; }
.win { fill: #fff; stroke: #1566d0; }
.t { fill: none; stroke: #fff; }
.ar { fill: #50b050; stroke: #2a8a2a; }
.dash { stroke-dasharray: 2 1; }
.i16 { width: 16px; height: 16px; shape-rendering: auto; }
.i14 { width: 14px; height: 14px; }

.titlebar { display: flex; align-items: center; height: 23px; padding: 0 2px; background: #fff; font: 12px/16px "Open Sans", "Noto Sans", sans-serif; color: #999; }
.caption { margin-left: 5px; }
.winctl { display: flex; margin-left: auto; }
.winctl button { width: 46px; display: grid; place-items: center; height: 20px; }
.winctl svg { width: 12px; height: 12px; }

.menubar { display: flex; height: 25px; align-items: center; padding-left: 7px; font: 12px/16px "Open Sans", "Noto Sans", sans-serif; }
.menubar > button { margin-right: 10px; }
.mdi { display: flex; margin-left: auto; padding-right: 3px; align-items: center; }
.mdi .i16 { margin-right: 3px; }
.mdi button { width: 17px; height: 20px; display: grid; place-items: center; border: 1px solid; border-color: #fff #777 #777 #fff; }
.mdi button svg { width: 12px; height: 12px; }
.mdi .mdi-close { margin-left: 2px; }

.toolbar { display: flex; height: 26px; }
.tools { display: flex; align-items: center; border: 1px solid; border-color: #fff #a0a0a0 #a0a0a0 transparent; }
.lead { flex: none; border-right-color: transparent; }
.lead-top { width: 634px; }
.lead-bottom { width: 643px; }
.tools button { width: 23px; height: 23px; display: grid; place-items: center; }
.tools button svg { width: 20px; height: 20px; shape-rendering: auto; }
.on { background: #f8f8f8; box-shadow: inset 1px 1px #a0a0a0, inset -1px -1px #fff; }
.sep { width: 5px; height: 24px; background: linear-gradient(90deg, transparent 1px, #a0a0a0 1px 2px, #fff 2px 3px, transparent 3px); }
.gap { width: 6px; }

.map { flex: 1; min-height: 0; background: #fff; display: flex; overflow: hidden; }
.drawing { flex: 1; width: 100%; }
.pipe { fill: none; stroke: #0000a8; shape-rendering: auto; }
.cad { font-size: 12px; font-style: italic; }
.red { fill: #c00; }
.blue { fill: #0000c0; }

.status { display: flex; height: 20px; }
.cell { display: flex; align-items: center; border-left: 1px solid #a0a0a0; border-top: 1px solid #a0a0a0; border-bottom: 1px solid #fff; padding-left: 1px; }
.cell:first-child { border-left: 0; padding-left: 4px; }
.cell input { width: 49px; height: 19px; border: 1px solid #666; background: #fff; }
.cell input.short { width: 45px; }
.c-scale { width: 121px; gap: 4px; }
.size { margin-left: 3px; }
.push { margin-left: auto; }
.c-nr { width: 163px; padding-left: 7px; }
.c-nr label { margin: 0 4px 0 9px; }
.c-nr input + label { margin: 0 8px 0 3px; }
.c-x { width: 88px; }
.c-h { width: 84px; padding-left: 7px; }
.c-h label { margin: 0 4px 0 9px; }
.c-edit { flex: 1; }
.dot { width: 6px; height: 6px; border-radius: 50%; background: #000; }

.modes { display: flex; height: 27px; padding-left: 4px; font: 12px/16px "Open Sans", "Noto Sans", sans-serif; }
.modegroup { display: flex; align-items: center; border: 1px solid; border-color: #fff #a0a0a0 #a0a0a0 #a0a0a0; padding-left: 6px; margin-right: 4px; }
.modegroup button { display: flex; align-items: center; height: 25px; gap: 5px; }
.modegroup:not(.tight) button { width: 31px; }
.tight { padding-left: 4px; }
.tight .on { margin-left: 4px; padding: 0 3px; }
.tight .on span + span { margin-left: 2px; }
.tile { width: 15px; height: 15px; color: #fff; font: bold 12px/15px "Liberation Sans", sans-serif; text-align: center; }
.green { background: #3a9468; }
.azure { background: #6f9bf5; }
.gray { background: #888; font-family: "Liberation Mono", monospace; }
.round { border-radius: 50%; }
.drop { width: 0; height: 0; border: 3px solid transparent; border-top: 4px solid #000; border-bottom: 0; }

.taskbar { display: flex; height: 40px; background: #003050; color: #fff; font: 11px/17px "Open Sans", "Noto Sans", sans-serif; }
.taskbar > button { width: 49px; height: 40px; display: grid; place-items: center; }
.taskbar > .sys { width: 48px; }
.taskbar > .first { margin-left: 2px; }
.taskbar > button > svg { width: 24px; height: 24px; shape-rendering: auto; }
.taskbar > .run { background: linear-gradient(#9bd0fb, #9bd0fb) center bottom / 40px 2px no-repeat; }
.taskbar > .active { background: #17578c; border-bottom: 2px solid #9bd0fb; }
.tray { display: flex; align-items: center; margin-left: auto; padding-right: 4px; }
.tray button { width: 24px; display: grid; place-items: center; }
.tray svg { width: 16px; height: 16px; shape-rendering: auto; }
.stack { display: flex; flex-direction: column; text-align: center; }
.lang { margin-left: 6px; width: 24px; }
.clock { margin-left: 8px; width: 66px; }
.tray .note { width: 51px; padding-right: 9px; height: 40px; border-right: 1px solid #5b7b92; }

.dialog { position: absolute; left: 55px; top: 6px; width: 594px; height: 473px; display: flex; flex-direction: column; border: 1px solid #2882cc; border-top: 0; background: #f0f0f0; box-shadow: 2px 4px 14px rgba(0, 0, 0, .4); }
.dialog > header { display: flex; align-items: center; height: 26px; padding: 0 4px 0 3px; background: #2882cc; color: #fff; font: 12px/16px "Open Sans", "Noto Sans", sans-serif; }
.dialog h1 { margin: 0; font: inherit; }
.dialog > header button { margin-left: auto; padding: 6px; }
.dialog > header svg { width: 10px; height: 10px; shape-rendering: auto; }
.dlg-body { flex: 1; display: flex; gap: 8px; padding: 1px 9px 6px 8px; }
.left { width: 298px; display: flex; flex-direction: column; gap: 5px; }
.right { flex: 1; display: flex; flex-direction: column; padding-top: 10px; }
fieldset { min-width: 0; margin: 0; padding: 0; border: 1px solid #a0a0a0; }
legend { margin-left: 6px; padding: 2px 1px 0; line-height: 12px; }
.desc { height: 88px; padding: 12px 9px 0 10px; }
.combo { display: grid; flex: none; align-items: center; height: 19px; border: 1px solid #999; background: #fff; }
.combo > * { grid-area: 1 / 1; }
.combo select { appearance: none; width: 100%; height: 100%; padding-left: 2px; }
.combo .drop { justify-self: end; margin-right: 5px; border-width: 4px 4px 0; }
.chev { width: 10px; height: 10px; justify-self: end; margin-right: 3px; shape-rendering: auto; }
.params { display: flex; align-items: flex-start; margin-top: 9px; line-height: 19px; padding-left: 1px; }
.params label { width: 28px; }
.params input { width: 61px; height: 19px; margin-right: 15px; padding-left: 2px; border: 1px solid #666; background: #fff; }
.params input + label { width: 36px; }
.color { width: 57px; height: 22px; border-color: #666; background: linear-gradient(#000, #000) 2px center / 34px 16px no-repeat #fff; }
.lists { flex: 1; display: flex; gap: 8px; }
.layers { width: 208px; padding-top: 4px; display: flex; flex-direction: column; }
.codes { width: 80px; padding-top: 4px; display: flex; }
.blank { flex: 1; background: #fff; }
.layers ul { flex: 1; margin: 0; padding: 1px 3px; list-style: none; background: #fff; font-size: 13px; line-height: 16px; }
.sort { display: flex; align-items: center; height: 23px; padding-left: 5px; }
.sort span { margin-right: 4px; }
.sort button { width: 22px; height: 22px; display: grid; place-items: center; margin-right: 1px; }
.sort svg { width: 18px; height: 18px; shape-rendering: auto; }

.picker { display: flex; flex: none; height: 342px; }
.palette { width: 252px; display: flex; align-items: flex-end; overflow: hidden; padding: 0 7px 7px; border: 1px solid #000; border-top: 0; background: linear-gradient(#000, #000) top / 100% 1px no-repeat #fff; }
.grid { flex: none; display: grid; grid-template-columns: repeat(8, 26px); grid-auto-rows: 26px; gap: 4px; }
.grid button { border: 1px solid #000; background: #fff; }
.grid svg { width: 100%; height: 100%; }
.w2 { grid-column: span 2; }
.w3 { grid-column: span 3; }
.w5 { grid-column: span 5; }
.h2 { grid-row: span 2; }
.grid .picked { background: #000; outline: 1px solid #000; border-color: #fff; }
.picked path { fill: none; stroke: #fff; }
.scroll { width: 16px; display: flex; flex-direction: column; align-items: center; margin-top: 2px; padding: 4px 0 2px; border-top: 1px solid #a0a0a0; }
.scroll svg { width: 10px; height: 10px; shape-rendering: auto; }
.thumb { width: 14px; height: 17px; margin: auto 0 42px 2px; background: #cdcdcd; }
.group { margin-top: 9px; height: 21px; background: #e1e1e1; border-color: #adadad; }
.actions { display: flex; gap: 7px; margin: 17px 2px 0; }
.actions button { display: flex; align-items: center; height: 41px; border: 1px solid; border-color: #fff #777 #777 #fff; box-shadow: inset -1px -1px #aaa; padding-left: 2px; }
.actions svg { width: 18px; height: 18px; shape-rendering: auto; }
.actions span { flex: 1; }
.actions .ok { width: 165px; border-color: #666; box-shadow: inset -2px -2px #888, inset 1px 1px #fff; }
.actions .cancel { flex: 1; padding-left: 4px; }
```
